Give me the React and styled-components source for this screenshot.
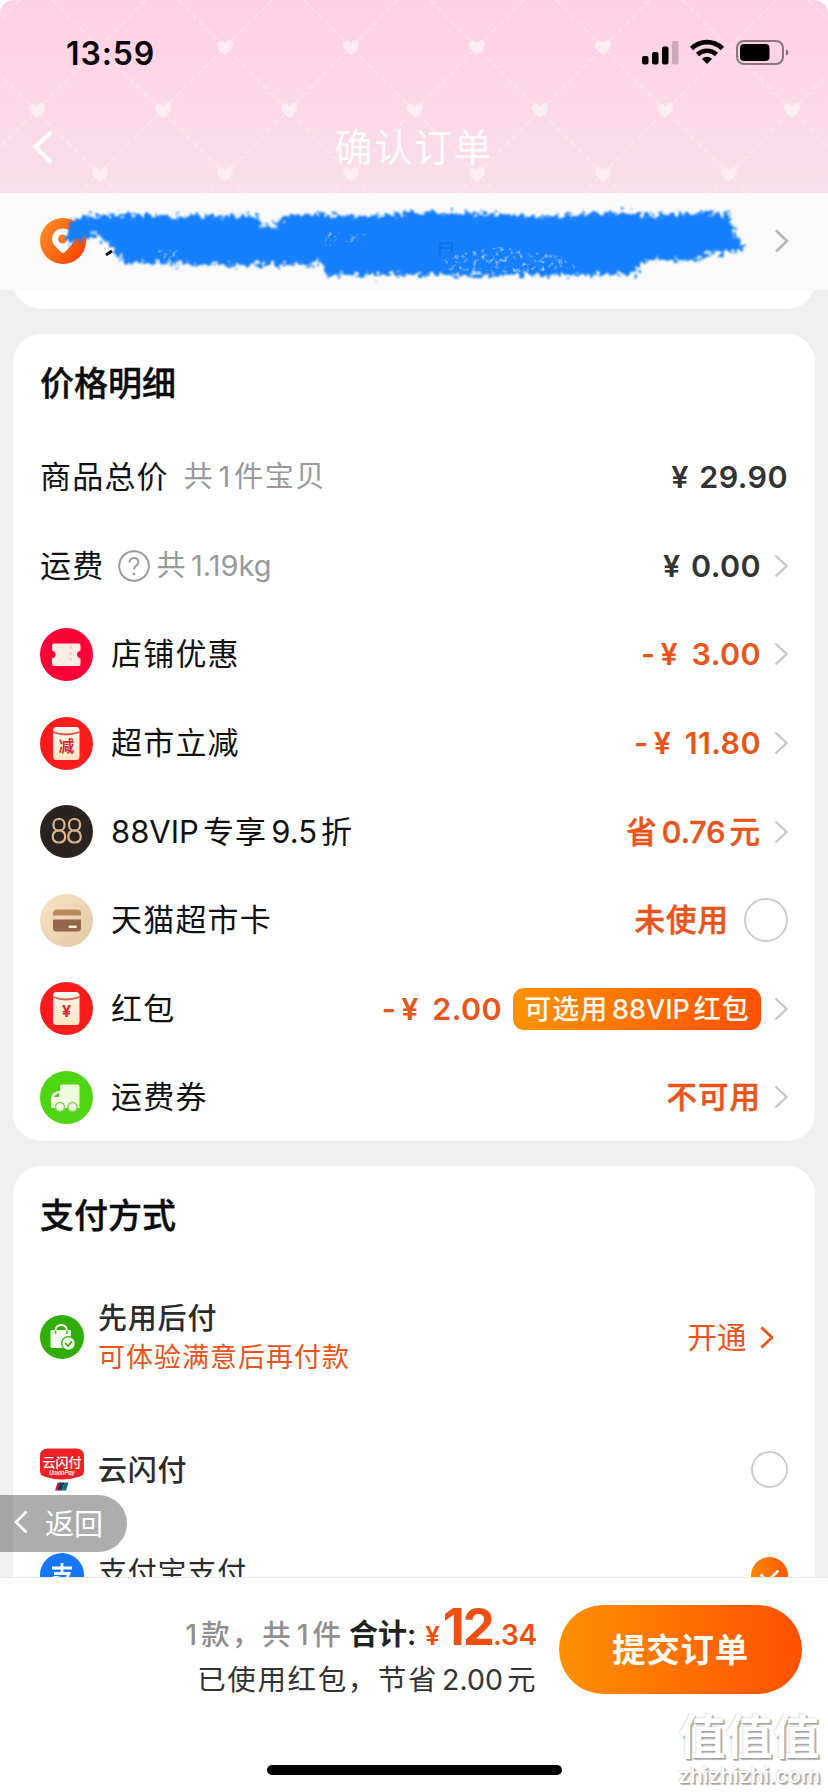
import React from "react";
import styled, { createGlobalStyle } from "styled-components";

const ORANGE = "#e8541a";

const GlobalStyle = createGlobalStyle`
  * {
    box-sizing: border-box;
  }
  body {
    margin: 0;
    background: #ffffff;
    font-family: Inter, "Noto Sans CJK SC", sans-serif;
  }
`;

const Page = styled.div`
  position: relative;
  display: flex;
  flex-direction: column;
  width: 828px;
  height: 1792px;
  overflow: hidden;
  background: #f0f0f0;
`;

const HeaderBack = styled.div`
  flex: none;
  background: #ffffff;
`;

const Header = styled.header`
  position: relative;
  height: 193px;
  overflow: hidden;
  border-radius: 14px 14px 0 0;
  background: linear-gradient(#ffd0e3, #f9e0ea);
`;

const Hearts = styled.svg`
  position: absolute;
  inset: 0;
`;

const StatusBar = styled.div`
  position: relative;
  display: flex;
  align-items: center;
  justify-content: space-between;
  height: 106px;
  padding: 0 38px 0 66px;
`;

const Clock = styled.span`
  font-size: 32px;
  font-weight: 600;
  letter-spacing: 0.9px;
  color: #0a0508;
  line-height: 40px;
  padding-top: 2px;
`;

const NavBar = styled.div`
  position: relative;
  display: grid;
  grid-template-columns: 60px 1fr 60px;
  align-items: center;
  height: 82px;
  padding: 0 0 0 31px;
  margin-right: 31px;
`;

const NavTitle = styled.h1`
  margin: 0;
  text-align: center;
  font-size: 38px;
  font-weight: 400;
  letter-spacing: 1.7px;
  line-height: 50px;
  color: rgba(255, 255, 255, 0.88);
`;

const AddressBar = styled.div`
  position: relative;
  z-index: 1;
  flex: none;
  height: 97px;
  background: #fafafa;
`;

const Content = styled.main`
  flex: 1;
  min-height: 0;
  overflow: hidden;
  padding: 0 13px;
`;

const Card = styled.section`
  height: ${({ $height }) => $height}px;
  margin-bottom: 25px;
  padding: 0 27px;
  border-radius: 28px;
  background: #ffffff;
`;

const CardEnd = styled.div`
  height: 60px;
  margin: -41px 0 25px;
  border-radius: 28px;
  background: #ffffff;
`;

const CardTitle = styled.h2`
  margin: 0;
  padding-top: 26px;
  height: 99px;
  font-size: 34px;
  font-weight: 500;
  line-height: 48px;
  color: #0c0c0c;
  -webkit-text-stroke: 0.4px #0c0c0c;
`;

const Row = styled.div`
  display: flex;
  align-items: center;
  height: 88.6px;
`;

const Icon = styled.svg`
  flex: none;
  display: block;
`;

const Label = styled.span`
  margin-left: ${({ $inset }) => ($inset ? "18px" : "0")};
  font-size: 31px;
  letter-spacing: 1.2px;
  line-height: 44px;
  color: #111111;
`;

const Hint = styled.span`
  margin-left: ${({ $left }) => $left}px;
  font-size: 29px;
  letter-spacing: 1.6px;
  line-height: 44px;
  color: #999999;
`;

// latin runs sit tighter than the Chinese text around them
const Latin = styled.span`
  letter-spacing: 0;
  margin: ${({ $start }) => ($start ? "0 4px 0 0" : "0 4px")};
`;

const Value = styled.span`
  margin-left: auto;
  display: flex;
  align-items: baseline;
  font-size: 30.5px;
  font-weight: ${({ $cjk }) => ($cjk ? 500 : 600)};
  letter-spacing: ${({ $cjk }) => ($cjk ? "1px" : "0.4px")};
  line-height: 44px;
  color: ${({ $dark }) => ($dark ? "#333333" : ORANGE)};
  -webkit-text-stroke: ${({ $cjk }) => ($cjk ? `0.5px ${ORANGE}` : "0")};
`;

const Minus = styled.span`
  margin-right: 5px;
`;

const Yen = styled.span`
  display: inline-block;
  width: ${({ $width }) => $width || 31}px;
`;

const Arrow = styled.svg`
  flex: none;
  margin-left: 13px;
`;

const Radio = styled.span`
  flex: none;
  width: ${({ $size }) => $size}px;
  height: ${({ $size }) => $size}px;
  margin-left: auto;
  border: 2px solid #cccccc;
  border-radius: 50%;

  ${Value} + & {
    margin-left: 15px;
  }
`;

const Badge = styled.span`
  display: flex;
  align-items: center;
  justify-content: center;
  width: 248px;
  height: 42px;
  margin-left: 11px;
  padding-bottom: 2px;
  border-radius: 11px;
  background: linear-gradient(90deg, #ff9300, #ff5000);
  font-size: 27px;
  font-weight: 500;
  letter-spacing: 0.9px;
  color: #fffaf0;
  white-space: nowrap;
`;

const PayRow = styled.div`
  display: flex;
  align-items: center;
  height: ${({ $height }) => $height}px;
`;

const PayText = styled.div`
  display: flex;
  flex-direction: column;
  margin-left: 14px;
  padding-top: ${({ $drop }) => $drop || 0}px;
  padding-bottom: ${({ $lift }) => $lift || 0}px;
`;

const PayName = styled.span`
  font-size: 29px;
  font-weight: ${({ $regular }) => ($regular ? 400 : 500)};
  letter-spacing: 0.8px;
  line-height: 39px;
  color: #2b2b2b;
`;

const PayNote = styled.span`
  font-size: 27px;
  letter-spacing: 1px;
  line-height: 39px;
  color: ${ORANGE};
`;

const OpenLink = styled.a`
  display: flex;
  align-items: center;
  margin-left: auto;
  margin-right: 15px;
  font-size: 29.5px;
  line-height: 40px;
  color: ${ORANGE};
`;

const BackPill = styled.button`
  position: absolute;
  left: 0;
  top: 1495px;
  display: flex;
  align-items: center;
  gap: 17px;
  width: 127px;
  height: 57px;
  padding: 0 0 3px 14px;
  border: none;
  border-radius: 0 29px 29px 0;
  background: rgba(60, 60, 60, 0.42);
  font-family: inherit;
  font-size: 29px;
  color: #ffffff;
`;

const Footer = styled.footer`
  flex: none;
  display: flex;
  flex-direction: column;
  align-items: center;
  height: 215px;
  border-top: 1px solid #e9e9e9;
  background: #ffffff;
`;

const CheckoutRow = styled.div`
  display: flex;
  justify-content: flex-end;
  align-items: center;
  gap: 22px;
  width: 100%;
  height: 143px;
  padding-right: 26px;
`;

const Summary = styled.div`
  display: flex;
  flex-direction: column;
  align-items: flex-end;
  gap: 7px;
  padding-top: 4px;
`;

const TotalLine = styled.div`
  display: flex;
  align-items: baseline;
  height: 49px;
  line-height: 49px;
  font-size: 28.5px;
  font-weight: 500;
  letter-spacing: 2px;
  color: #8f8f8f;
`;

const TotalLabel = styled.b`
  margin: 0 9px 0 6px;
  font-size: 29px;
  font-weight: 600;
  letter-spacing: 0;
  color: #222222;
`;

const Price = styled.b`
  margin-left: ${({ $heavy }) => ($heavy ? 3 : 0)}px;
  font-size: ${({ $size }) => $size}px;
  font-weight: ${({ $heavy }) => ($heavy ? 700 : 600)};
  letter-spacing: ${({ $heavy }) => ($heavy ? "-2px" : "-0.2px")};
  color: #ee4f10;
`;

const SavedLine = styled.div`
  height: 44px;
  line-height: 44px;
  font-size: 28.5px;
  letter-spacing: 1.6px;
  color: #333333;
`;

const SubmitButton = styled.button`
  flex: none;
  width: 243px;
  height: 89px;
  padding: 0 0 4px;
  border: none;
  border-radius: 45px;
  background: linear-gradient(90deg, #ff9000, #ff5000);
  font-family: inherit;
  font-size: 33.5px;
  font-weight: 600;
  letter-spacing: 0.8px;
  color: #fffaf2;
`;

const HomeIndicator = styled.div`
  width: 295px;
  height: 10px;
  margin-top: 44px;
  border-radius: 5px;
  background: #000000;
`;

const Watermark = styled.div`
  position: absolute;
  right: 8px;
  bottom: 5px;
  display: flex;
  flex-direction: column;
  align-items: center;
  width: 142px;
  color: #ffffff;
  font-weight: 600;
  text-shadow: 1px 1px 1px #a0a0a0, 2px 2px 1px #bcbcbc, -1px -1px 1px #e6e6e6;
`;

const WatermarkMain = styled.span`
  font-size: 47px;
  line-height: 53px;
`;

const WatermarkSite = styled.span`
  font-size: 21.5px;
  font-weight: 500;
  line-height: 24px;
`;

const heartRows = [
  { y: 47, xs: [225, 351, 477, 603] },
  { y: 110, xs: [37, 163, 289, 415, 540, 665, 792] },
  { y: 174, xs: [100, 225, 351, 477, 603, 729] }
];

const HeartPattern = () => {
  const lines = [];
  for (let i = -3; i < 9; i++) {
    lines.push(`M${i * 126 + 52} 0L${i * 126 + 244} 193`);
    lines.push(`M${i * 126 + 146} 0L${i * 126 - 46} 193`);
  }
  return (
    <Hearts width='828' height='193' viewBox='0 0 828 193'>
      <path
        d={lines.join("")}
        stroke='#fff'
        strokeOpacity='0.38'
        strokeWidth='1.4'
        strokeDasharray='6 4'
        fill='none'
      />
      {heartRows.map(row =>
        row.xs.map(x => (
          <path
            key={`${x}-${row.y}`}
            transform={`translate(${x} ${row.y})`}
            d='M0 8C-4 5-8 1-8-2C-8-7-3-8 0-4C3-8 8-8 8-3C8 1 4 5 0 8Z'
            fill='#fff0f6'
            opacity='0.85'
          />
        ))
      )}
    </Hearts>
  );
};

const StatusIcons = () => (
  <Icon width='150' height='28' viewBox='0 0 150 28'>
    <rect x='2' y='17' width='6.5' height='8.5' rx='2' />
    <rect x='12' y='13' width='6.5' height='12.5' rx='2' />
    <rect x='22' y='7.5' width='6.5' height='18' rx='2' />
    <rect x='32' y='2' width='6.5' height='23.5' rx='2' opacity='0.2' />
    <g transform='translate(67 0)' fill='none' stroke='#050204' strokeWidth='4.6'>
      <path d='M-15.5 9.5C-6.5 1 6.5 1 15.5 9.5' />
      <path d='M-9.5 15.5C-4 10.5 4 10.5 9.5 15.5' />
      <path d='M-5 20C-2 17 2 17 5 20L0 25Z' fill='#050204' stroke='none' />
    </g>
    <rect x='97' y='2' width='46' height='23' rx='7' fill='none' stroke='#000' strokeOpacity='0.45' strokeWidth='2' />
    <rect x='100' y='5' width='29.5' height='17' rx='4' />
    <path d='M146 10.5C149 11.5 149 15.5 146 16.5Z' opacity='0.5' />
  </Icon>
);

const Chevron = ({ color = "#c8c8c8", width = 2.4, size = 24 }) => (
  <Arrow width={(size * 14) / 24} height={size} viewBox='0 0 14 24' fill='none'>
    <path d='M1.5 1.5L12.5 12L1.5 22.5' stroke={color} strokeWidth={width} />
  </Arrow>
);

const AddressArt = () => (
  <Icon width='828' height='97' viewBox='0 193 828 97'>
    <defs>
      <linearGradient id='pin' x1='0' y1='0' x2='1' y2='0.6'>
        <stop offset='0' stopColor='#ff932e' />
        <stop offset='1' stopColor='#ff4800' />
      </linearGradient>
      <filter id='rough' x='-5%' y='-20%' width='110%' height='140%'>
        <feTurbulence type='fractalNoise' baseFrequency='0.2' numOctaves='3' seed='4' />
        <feDisplacementMap in='SourceGraphic' scale='17' xChannelSelector='R' yChannelSelector='G' />
        <feGaussianBlur stdDeviation='0.8' />
      </filter>
      <filter id='fleck' x='0' y='0' width='100%' height='100%'>
        <feTurbulence type='fractalNoise' baseFrequency='0.22' numOctaves='3' seed='9' />
        <feColorMatrix values='0 0 0 0 0.7  0 0 0 0 0.85  0 0 0 0 1  3 0 0 0 -1.6' />
        <feComposite in2='SourceGraphic' operator='in' />
        <feGaussianBlur stdDeviation='0.5' />
      </filter>
    </defs>
    <circle cx='63' cy='241' r='23' fill='url(#pin)' />
    <path d='M65 252Q63 254 61 252C57 248 52 244 52 239A11 10.500 0 0 1 74 239C74 243 69 248 65 252Z' fill='#fff' />
    <circle cx='62.5' cy='239' r='4.5' fill='#ff7a22' />
    <path d='M106 255L112 251' stroke='#111' strokeWidth='3' />
    <path
      filter='url(#rough)'
      fill='#127ffc'
      d='M69 221L85 216L115 214L150 214L172 218L190 215L230 216L256 215L263 227L273 226L285 216L310 214L370 217L400 213L460 213L500 214L550 217L590 214L628 212L650 215L700 213L730 214L735 232L745 247L733 252L708 254L698 261L643 260L637 274L600 275L450 275L327 275L320 261L308 265L200 265L122 262L112 248L98 235L84 238L76 242L66 244Z'
    />
    <path filter='url(#fleck)' fill='#fff' opacity='0.8' d='M440 256L500 247L560 256L580 268L520 272L445 270Z' />
    <path
      filter='url(#fleck)'
      fill='#fff'
      opacity='0.6'
      d='M158 250H178V262H158ZM325 232H340V246H325ZM345 234H365V242H345Z'
    />
    <path d='M440 243H452V253M440 248H452M440 243V256' stroke='#0c5cc4' fill='none' opacity='0.7' />
    <path d='M776 230.5L787 241L776 251.5' fill='none' stroke='#b5b5b5' strokeWidth='2.5' />
  </Icon>
);

const CouponIcon = () => (
  <Icon width='53' height='53' viewBox='0 0 53 53'>
    <circle cx='26.5' cy='26.5' r='26.5' fill='#fb0338' />
    <path
      d='M14 15.5H38.5Q40.5 15.5 40.5 17.5V22.5Q37 23.5 37 26.5Q37 29.5 40.5 30.5V36Q40.5 38 38.5 38H14Q12 38 12 36V30.5Q15.5 29.5 15.5 26.5Q15.5 23.5 12 22.5V17.5Q12 15.5 14 15.5Z'
      fill='#fdeee4'
    />
    <path d='M30.5 18V36' stroke='#efc9c2' strokeWidth='2' strokeDasharray='3 3' />
  </Icon>
);

const EnvelopeIcon = ({ text }) => (
  <Icon width='53' height='53' viewBox='0 0 53 53'>
    <defs>
      <linearGradient id='env' x1='0' y1='0' x2='0' y2='1'>
        <stop offset='0' stopColor='#fff6ec' />
        <stop offset='1' stopColor='#fde6c4' />
      </linearGradient>
    </defs>
    <circle cx='26.5' cy='26.5' r='26.5' fill='#fa1d1c' />
    <rect x='13' y='10' width='26.5' height='33' rx='3.5' fill='url(#env)' />
    <path d='M13 15Q26 20 39.5 15' fill='none' stroke='#e0564a' strokeWidth='1.8' />
    <text
      x='26.5'
      y='34.5'
      textAnchor='middle'
      fontSize={text === "¥" ? 16 : 15.5}
      fontWeight='700'
      fill='#cf2f2b'
    >
      {text}
    </text>
  </Icon>
);

const VipIcon = () => (
  <Icon width='53' height='53' viewBox='0 0 53 53'>
    <circle cx='26.5' cy='26.5' r='26.5' fill='#292421' />
    <g fill='none' stroke='#dcb58c' strokeWidth='2.2'>
      {[19, 34.5].map(x => (
        <g key={x}>
          <rect x={x - 5.5} y='14' width='11' height='11.5' rx='5' />
          <rect x={x - 6.2} y='25.5' width='12.4' height='12' rx='5.5' />
        </g>
      ))}
    </g>
  </Icon>
);

const CardIcon = () => (
  <Icon width='53' height='53' viewBox='0 0 53 53'>
    <defs>
      <linearGradient id='cream' x1='0' y1='0' x2='1' y2='1'>
        <stop offset='0' stopColor='#fae4c6' />
        <stop offset='1' stopColor='#e2c7a2' />
      </linearGradient>
    </defs>
    <circle cx='26.5' cy='26.5' r='26.5' fill='url(#cream)' />
    <path d='M13 21.5V19Q13 15.5 16.5 15.5H37.5Q41 15.5 41 19V21.5Z' fill='#b78c60' />
    <path d='M13 25.5H41V34Q41 37.5 37.5 37.5H16.5Q13 37.5 13 34Z' fill='#94674d' />
    <rect x='28.5' y='31.5' width='8.5' height='2.5' rx='1.2' fill='#fbe6cf' />
  </Icon>
);

const TruckIcon = () => (
  <Icon width='53' height='53' viewBox='0 0 53 53'>
    <circle cx='26.5' cy='26.5' r='26.5' fill='#4fd511' />
    <path
      d='M22 13.5H37.5Q39.5 13.5 39.5 15.5V37H13Q11 37 11 35V27Q11 24 13.5 22L18 20H20V15.5Q20 13.5 22 13.5Z'
      fill='#effbdf'
    />
    <path d='M14 25.5L19 21.5V26H14Z' fill='#6cbb48' />
    <g fill='#effbdf' stroke='#8ccf63' strokeWidth='1.5'>
      <circle cx='20' cy='36' r='4.5' />
      <circle cx='32.5' cy='36' r='4.5' />
    </g>
  </Icon>
);

const HelpIcon = styled(Icon)`
  margin-left: 14px;
`;

const BagIcon = () => (
  <Icon width='44' height='44' viewBox='0 0 44 44'>
    <circle cx='22' cy='22' r='22' fill='#30ad07' />
    <path d='M12 15H30Q31 15 31 16V33H12.5Q10.5 33 10.5 31V16.500Q10.500 15 12 15Z' fill='#f4fcee' />
    <path d='M15.5 16Q16 10 21 10Q26.500 10 27 16' fill='none' stroke='#f4fcee' strokeWidth='2' />
    <path d='M15.500 15.500V19M27 15.500V19' stroke='#5fc03b' strokeWidth='1.8' />
    <circle cx='28.5' cy='28.5' r='7.4' fill='#30ad07' />
    <circle cx='28.5' cy='28.5' r='6.2' fill='#f4fcee' />
    <path d='M25 28L28 31L32 26.5' fill='none' stroke='#30ad07' strokeWidth='1.6' />
  </Icon>
);

const UnionPayIcon = () => (
  <Icon width='44' height='43' viewBox='0 0 44 43'>
    <path d='M8 0.500H36Q44 0.500 44 8V23Q44 27 40 28.500Q22 34.500 4 28.500Q0 27 0 23V8Q0 0.500 8 0.500Z' fill='#ee2226' />
    <text x='22' y='18.5' textAnchor='middle' fontSize='13' fontWeight='500' fill='#fff'>
      云闪付
    </text>
    <text x='22' y='26.5' textAnchor='middle' fontSize='5.5' fontStyle='italic' fontWeight='600' fill='#fff'>
      UnionPay
    </text>
    <path d='M17.5 34.5H21L18.5 42.5H15Z' fill='#c0243b' />
    <path d='M20 34.5H24.5L22 42.5H17.5Z' fill='#123a63' />
    <path d='M24.5 34.5H28.5L26 42.5H22Z' fill='#16706d' />
  </Icon>
);

const AlipayIcon = () => (
  <Icon width='44' height='44' viewBox='0 0 44 44'>
    <circle cx='22' cy='22' r='22' fill='#1876fb' />
    <path
      d='M12 15H32M22 10V20M14 20.5H29Q27 27 20 32Q14 34.5 10.5 30Q10 25 16 24.5Q24 25.5 38 32'
      fill='none'
      stroke='#fff'
      strokeWidth='2.8'
    />
  </Icon>
);

const CheckedIcon = styled(Icon)`
  margin-left: auto;
`;

const discounts = [
  { icon: <CouponIcon />, label: "店铺优惠", amount: "3.00" },
  { icon: <EnvelopeIcon text='减' />, label: "超市立减", amount: "11.80" },
  { icon: <VipIcon />, label: "88VIP专享9.5折", text: "省0.76元" },
  { icon: <CardIcon />, label: "天猫超市卡", text: "未使用", radio: true },
  { icon: <EnvelopeIcon text='¥' />, label: "红包", amount: "2.00", badge: "可选用88VIP红包" },
  { icon: <TruckIcon />, label: "运费券", text: "不可用" }
];

const mixed = text =>
  text
    .split(/([\w.]+)/)
    .filter(Boolean)
    .map((part, i) =>
      /[\w.]/.test(part) ? (
        <Latin key={i} $start={i === 0}>
          {part}
        </Latin>
      ) : (
        part
      )
    );

const DiscountRow = ({ icon, label, amount, text, radio, badge }) => (
  <Row>
    {icon}
    <Label $inset>{mixed(label)}</Label>
    {amount ? (
      <Value>
        <Minus>-</Minus>
        <Yen>¥</Yen>
        {amount}
      </Value>
    ) : (
      <Value $cjk>
        <span>{mixed(text)}</span>
      </Value>
    )}
    {badge && (
      <Badge>
        <span>{mixed(badge)}</span>
      </Badge>
    )}
    {radio ? <Radio $size={44} /> : <Chevron />}
  </Row>
);

const App = () => (
  <Page>
    <GlobalStyle />
    <HeaderBack>
      <Header>
        <HeartPattern />
        <StatusBar>
          <Clock>13:59</Clock>
          <StatusIcons />
        </StatusBar>
        <NavBar>
          <Icon width='22' height='34' viewBox='0 0 22 34' fill='none'>
            <path d='M20 2L4.5 17L20 32' stroke='#fff' strokeWidth='4' />
          </Icon>
          <NavTitle>确认订单</NavTitle>
        </NavBar>
      </Header>
    </HeaderBack>
    <AddressBar>
      <AddressArt />
    </AddressBar>
    <Content>
      <CardEnd />
      <Card $height={807}>
        <CardTitle>价格明细</CardTitle>
        <Row>
          <Label>商品总价</Label>
          <Hint $left={15}>{mixed("共1件宝贝")}</Hint>
          <Value $dark>
            <Yen $width={28}>¥</Yen>29.90
          </Value>
        </Row>
        <Row>
          <Label>运费</Label>
          <HelpIcon width='32' height='32' viewBox='0 0 32 32' fill='none' stroke='#9b9b9b' strokeWidth='2'>
            <circle cx='16' cy='16' r='14.8' />
            <path d='M11.5 12.5C11.5 6.5 20.5 6.5 20.5 12C20.5 15.5 16 15.5 16 19.5' />
            <circle cx='16' cy='24' r='1.3' fill='#9b9b9b' stroke='none' />
          </HelpIcon>
          <Hint $left={6}>{mixed("共1.19kg")}</Hint>
          <Value $dark>
            <Yen $width={28}>¥</Yen>0.00
          </Value>
          <Chevron />
        </Row>
        {discounts.map(item => (
          <DiscountRow key={item.label} {...item} />
        ))}
      </Card>
      <Card $height={500}>
        <CardTitle>支付方式</CardTitle>
        <PayRow $height={144}>
          <BagIcon />
          <PayText $drop={2}>
            <PayName>先用后付</PayName>
            <PayNote>可体验满意后再付款</PayNote>
          </PayText>
          <OpenLink>
            开通
            <Chevron color={ORANGE} width={3} size={23} />
          </OpenLink>
        </PayRow>
        <PayRow $height={121}>
          <UnionPayIcon />
          <PayText $drop={2}>
            <PayName>云闪付</PayName>
          </PayText>
          <Radio $size={37} />
        </PayRow>
        <PayRow $height={90}>
          <AlipayIcon />
          <PayText $lift={6}>
            <PayName $regular>支付宝支付</PayName>
          </PayText>
          <CheckedIcon width='37' height='37' viewBox='0 0 38 38'>
            <defs>
              <linearGradient id='check' x1='0' x2='1'>
                <stop offset='0' stopColor='#ff8800' />
                <stop offset='1' stopColor='#ff5800' />
              </linearGradient>
            </defs>
            <circle cx='19' cy='19' r='19' fill='url(#check)' />
            <path d='M10 18L17 25L28 14' fill='none' stroke='#fff' strokeWidth='2.8' />
          </CheckedIcon>
        </PayRow>
      </Card>
    </Content>
    <BackPill>
      <Icon width='14' height='24' viewBox='0 0 14 24' fill='none'>
        <path d='M12.5 1.5L2 12L12.5 22.5' stroke='#fff' strokeWidth='2.5' />
      </Icon>
      返回
    </BackPill>
    <Footer>
      <CheckoutRow>
        <Summary>
          <TotalLine>
            <span>{mixed("1款，共1件")}</span>
            <TotalLabel>合计:</TotalLabel>
            <Price $size={26}>¥</Price>
            <Price $size={51} $heavy>
              12
            </Price>
            <Price $size={28}>.34</Price>
          </TotalLine>
          <SavedLine>{mixed("已使用红包，节省2.00元")}</SavedLine>
        </Summary>
        <SubmitButton>提交订单</SubmitButton>
      </CheckoutRow>
      <HomeIndicator />
    </Footer>
    <Watermark>
      <WatermarkMain>值值值</WatermarkMain>
      <WatermarkSite>zhizhizhi.com</WatermarkSite>
    </Watermark>
  </Page>
);

export default App;
